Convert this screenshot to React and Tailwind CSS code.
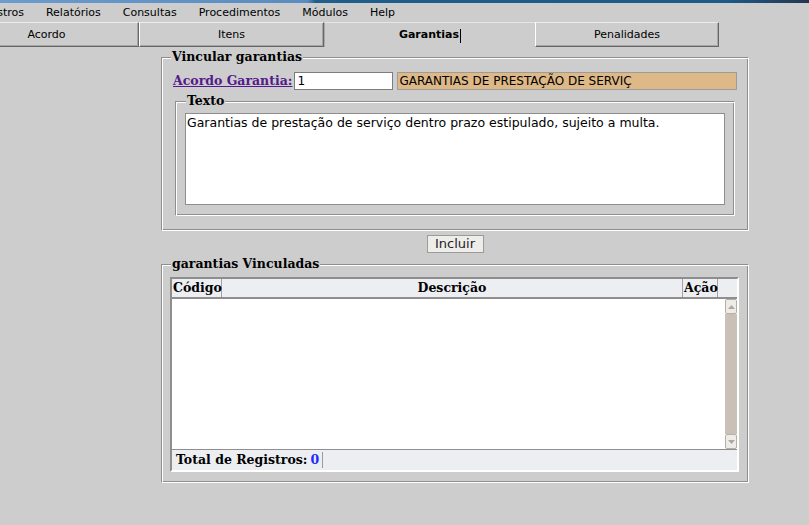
import React from "react";

const sans = "font-['DejaVu_Sans',sans-serif]";
const serif = "font-['DejaVu_Serif',serif]";

const menu = ["Cadastros", "Relatórios", "Consultas", "Procedimentos", "Módulos", "Help"];

const tabs = [
  { label: "Acordo", width: "w-[185px]" },
  { label: "Itens", width: "w-[185px]" },
  { label: "Garantias", width: "w-[211px]", active: true },
  { label: "Penalidades", width: "w-[184px]" },
];

// grooved fieldset, like the old swing/html look
const Fieldset = ({ legend, className = "", legendClass = "", children }) => (
  <fieldset
    className={`min-w-0 border border-t-[#8e8e8e] border-l-[#8e8e8e] border-r-white border-b-white shadow-[inset_1px_1px_0_#ffffff,inset_-1px_-1px_0_#8e8e8e] ${className}`}
  >
    <legend
      className={`bg-[#cdcdcd] px-[1px] ${serif} text-[12.5px] font-bold leading-[16px] text-black ${legendClass}`}
    >
      {legend}
    </legend>
    {children}
  </fieldset>
);

const ScrollButton = ({ up }) => (
  <div className="flex h-[15px] items-center justify-center rounded-[2px] border border-[#b7aea4] bg-[#efece8]">
    <svg width="7" height="4" viewBox="0 0 7 4">
      <path d={up ? "M0 4 L3.5 0 L7 4 Z" : "M0 0 L3.5 4 L7 0 Z"} fill="#a8a8a8" />
    </svg>
  </div>
);

const App = () => {
  return (
    <div className={`min-h-screen overflow-hidden bg-[#cdcdcd] text-black ${sans}`}>
      {/* window title strip */}
      <div className="h-[3px] bg-[linear-gradient(90deg,#6c9bcc_0%,#5a8cc1_38%,#205f8c_39%,#1c5a87_90%,#27354f_100%)]" />

      {/* menu */}
      <nav className="-ml-[42px] flex h-[18px] items-center pt-[2px] text-[11px] leading-[16px]">
        {menu.map((item) => (
          <span key={item} className="whitespace-nowrap px-[11px]">
            {item}
          </span>
        ))}
      </nav>

      {/* tabs */}
      <div className="-ml-[46px] mt-[1px] flex h-[25px]">
        {tabs.map((tab) =>
          tab.active ? (
            <div
              key={tab.label}
              className={`${tab.width} flex shrink-0 items-center justify-center border-l border-t border-l-[#a9a9a9] border-t-[#e6e6e6] pt-[1px] text-[11px] font-bold`}
            >
              {tab.label}
              <span className="ml-[1px] h-[14px] w-[1px] bg-black" />
            </div>
          ) : (
            <div
              key={tab.label}
              className={`${tab.width} flex shrink-0 items-center justify-center border border-l-white border-t-[#ececec] border-r-[#666666] border-b-[#666666] pt-[1px] shadow-[inset_-1px_-1px_0_#a6a6a6] text-[11px]`}
            >
              {tab.label}
            </div>
          )
        )}
      </div>

      <div className="ml-[161px] w-[588px] pt-[2px]">
        {/* Vincular garantias */}
        <Fieldset legend="Vincular garantias" className="px-[9px] pb-[14px] pt-[7px]">
          <div className="flex h-[18px] items-center">
            <a
              href="#"
              className={`ml-[2px] whitespace-nowrap ${serif} text-[12.5px] font-bold text-[#551a8b] underline`}
            >
              Acordo Garantia:
            </a>
            <input
              readOnly
              value="1"
              className="ml-[2px] h-[18px] w-[99px] border border-[#7d7d7d] bg-white px-[2px] text-[12px] outline-none"
            />
            <div className="ml-[4px] mr-[2px] h-[18px] flex-1 overflow-hidden whitespace-nowrap border border-[#9c9c9c] bg-[#deb887] px-[1px] text-[12px] leading-[16px]">
              GARANTIAS DE PRESTAÇÃO DE SERVIÇ
            </div>
          </div>

          <Fieldset
            legend="Texto"
            className="mx-[4px] mt-[3px] px-[9px] pb-[10px] pt-[4px]"
            legendClass="ml-[1px]"
          >
            <textarea
              readOnly
              value="Garantias de prestação de serviço dentro prazo estipulado, sujeito a multa."
              className="block h-[92px] w-full resize-none border border-[#8e8e8e] bg-white px-[1px] pt-[1px] text-[12.5px] leading-[15px] outline-none"
            />
          </Fieldset>
        </Fieldset>

        <div className="mt-[4px] flex justify-center">
          <button className="h-[18px] w-[57px] border border-[#9b9b9b] bg-[#efedea] text-[13px] leading-[16px] text-[#222222]">
            Incluir
          </button>
        </div>

        {/* garantias Vinculadas */}
        <Fieldset legend="garantias Vinculadas" className="mt-[3px] px-[9px] pb-[10px] pt-[5px]">
          <div className="-ml-[1px] border-2 border-l-[#8e8e8e] border-t-[#8e8e8e] border-r-white border-b-white">
            <div className={`flex h-[20px] border-b-2 border-[#8e8e8e] bg-[#eceef2] ${serif} text-[12.5px] font-bold leading-[18px]`}>
              <div className="w-[50px] border-r border-[#a3a3a3] pl-[1px]">Código</div>
              <div className="flex-1 border-r border-[#a3a3a3] text-center">Descrição</div>
              <div className="w-[35px] border-r border-[#a3a3a3] pl-[1px]">Ação</div>
              <div className="w-[19px]" />
            </div>
            <div className="flex h-[150px] bg-white">
              <div className="flex-1" />
              <div className="flex w-[12px] flex-col">
                <ScrollButton up />
                <div className="flex-1 bg-[#c9c0b7]" />
                <ScrollButton />
              </div>
            </div>
            <div className={`flex h-[21px] items-center border-t border-[#8e8e8e] bg-[#eceef2] pl-[4px] ${serif} text-[12.5px] font-bold`}>
              <span>Total de Registros:</span>
              <span className="ml-[3px] text-[#1f2cff]">0</span>
              <span className="ml-[3px] h-[16px] w-[1px] bg-[#9a9a9a]" />
            </div>
          </div>
        </Fieldset>
      </div>
    </div>
  );
};

export default App;
